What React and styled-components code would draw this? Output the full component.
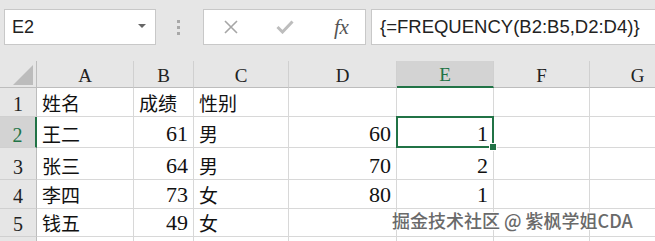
import React from "react";
import styled, { createGlobalStyle, css } from "styled-components";

const GREEN = "#217346";

const GlobalStyle = createGlobalStyle`
  html, body {
    margin: 0;
    padding: 0;
    background: #ffffff;
  }
`;

const Page = styled.div`
  position: relative;
  width: 655px;
  height: 241px;
  overflow: hidden;
  background: #ffffff;
  font-family: "Liberation Serif", "Noto Sans CJK SC", serif;
`;

const Toolbar = styled.div`
  display: flex;
  align-items: flex-start;
  height: 61px;
  padding: 9px 0 0 4px;
  box-sizing: border-box;
  background: #e6e6e6;
`;

const NameBox = styled.div`
  display: flex;
  align-items: center;
  justify-content: space-between;
  width: 152px;
  height: 36px;
  box-sizing: border-box;
  padding: 0 9px 0 7px;
  background: #fff;
  border: 1px solid #c8c8c8;
  font-family: "Liberation Sans", "Noto Sans", sans-serif;
  font-size: 18px;
  color: #222;
`;

const Caret = styled.span`
  width: 0;
  height: 0;
  border-left: 4px solid transparent;
  border-right: 4px solid transparent;
  border-top: 4px solid #666;
  margin-bottom: 2px;
`;

const Grip = styled.div`
  display: flex;
  flex-direction: column;
  gap: 3px;
  width: 47px;
  padding: 11px 0 0 21px;
  box-sizing: border-box;
`;

const GripDot = styled.span`
  width: 3px;
  height: 3px;
  background: #a8a8a8;
`;

const FormulaButtons = styled.div`
  display: flex;
  width: 163px;
  height: 36px;
  box-sizing: border-box;
  background: #fff;
  border: 1px solid #c8c8c8;
`;

const FormulaButton = styled.div`
  flex: 1;
  display: flex;
  align-items: center;
  justify-content: center;
`;

const FxLabel = styled.span`
  font-family: "Liberation Serif", serif;
  font-style: italic;
  font-size: 21px;
  color: #555;
  letter-spacing: -0.5px;
  margin-left: 6px;
`;

const FormulaInput = styled.div`
  flex: 1;
  display: flex;
  align-items: center;
  height: 36px;
  margin-left: 5px;
  padding-left: 8px;
  box-sizing: border-box;
  background: #fff;
  border: 1px solid #c8c8c8;
  border-right: none;
  font-family: "Liberation Sans", "Noto Sans", sans-serif;
  font-size: 18.5px;
  color: #222;
  white-space: nowrap;
`;

const Sheet = styled.div`
  display: grid;
  grid-template-columns: 37px 97px 60px 95px 108px 97px 96px 96px;
  grid-template-rows: 27px 29px 31px 32px 29px 28px 20px;
  width: 706px;
`;

const Cell = styled.div`
  position: relative;
  display: flex;
  align-items: flex-end;
  justify-content: ${(p) => (p.$num ? "flex-end" : "flex-start")};
  padding: 0 5px 2px 5px;
  box-sizing: border-box;
  border-right: 1px solid #d8d8d8;
  border-bottom: 1px solid #d8d8d8;
  font-size: ${(p) => (p.$num ? "22px" : "19px")};
  line-height: 1;
  color: #111;
  white-space: nowrap;
  z-index: ${(p) => (p.$selected ? 1 : "auto")};
`;

const headerBase = css`
  display: flex;
  align-items: center;
  justify-content: center;
  box-sizing: border-box;
  background: ${(p) => (p.$active ? "#d3d3d3" : "#e6e6e6")};
  color: ${(p) => (p.$active ? GREEN : "#222")};
  line-height: 1;
`;

const ColHead = styled.div`
  ${headerBase}
  padding-top: 2px;
  font-size: 19px;
  border-right: 1px solid #d0d0d0;
  border-bottom: ${(p) => (p.$active ? `2px solid ${GREEN}` : "1px solid #bdbdbd")};
`;

const RowHead = styled.div`
  ${headerBase}
  align-items: flex-end;
  padding-bottom: 2px;
  font-size: 20px;
  border-bottom: 1px solid #d0d0d0;
  border-right: ${(p) => (p.$active ? `2px solid ${GREEN}` : "1px solid #bdbdbd")};
`;

const Corner = styled.div`
  display: flex;
  align-items: flex-end;
  justify-content: flex-end;
  padding: 0 3px 2px 0;
  box-sizing: border-box;
  background: #e6e6e6;
  border-right: 1px solid #bdbdbd;
  border-bottom: 1px solid #bdbdbd;
`;

const CornerTriangle = styled.span`
  width: 0;
  height: 0;
  border-left: 20px solid transparent;
  border-bottom: 20px solid #bcbcbc;
`;

const Selection = styled.div`
  position: absolute;
  top: -1px;
  left: -1px;
  right: -1px;
  bottom: -1px;
  border: 2px solid ${GREEN};
  pointer-events: none;
`;

const FillHandle = styled.span`
  position: absolute;
  right: -5px;
  bottom: -5px;
  width: 6px;
  height: 6px;
  background: ${GREEN};
  border: 1px solid #fff;
`;

const Watermark = styled.div`
  position: absolute;
  left: 392px;
  top: 207px;
  z-index: 2;
  font-family: "Noto Sans CJK SC", "Noto Sans", sans-serif;
  font-size: 18px;
  font-weight: 500;
  color: #6a6a6a;
  white-space: nowrap;
  text-shadow: 1px 0 0 #fff, -1px 0 0 #fff, 0 1px 0 #fff, 0 -1px 0 #fff;
`;

const columns = ["A", "B", "C", "D", "E", "F", "G"];

const rows = [
  ["姓名", "成绩", "性别", "", "", "", ""],
  ["王二", "61", "男", "60", "1", "", ""],
  ["张三", "64", "男", "70", "2", "", ""],
  ["李四", "73", "女", "80", "1", "", ""],
  ["钱五", "49", "女", "", "", "", ""],
  ["", "", "", "", "", "", ""],
];

const isNum = (v) => /^\d+$/.test(v);

function App() {
  return (
    <Page>
      <GlobalStyle />
      <Toolbar>
        <NameBox>
          E2
          <Caret />
        </NameBox>
        <Grip>
          <GripDot />
          <GripDot />
          <GripDot />
        </Grip>
        <FormulaButtons>
          <FormulaButton>
            <svg width="16" height="16" viewBox="0 0 16 16">
              <path d="M2 2 L14 14 M14 2 L2 14" stroke="#a6a6a6" strokeWidth="1.6" fill="none" />
            </svg>
          </FormulaButton>
          <FormulaButton>
            <svg width="18" height="14" viewBox="0 0 18 14">
              <path d="M1.5 7 L6.5 12 L16.5 1.5" stroke="#bdbdbd" strokeWidth="3" fill="none" />
            </svg>
          </FormulaButton>
          <FormulaButton>
            <FxLabel>fx</FxLabel>
          </FormulaButton>
        </FormulaButtons>
        <FormulaInput>{"{=FREQUENCY(B2:B5,D2:D4)}"}</FormulaInput>
      </Toolbar>
      <Sheet>
        <Corner>
          <CornerTriangle />
        </Corner>
        {columns.map((c) => (
          <ColHead key={c} $active={c === "E"}>
            {c}
          </ColHead>
        ))}
        {rows.map((row, r) => {
          return (
            <React.Fragment key={r}>
              <RowHead $active={r === 1}>{r < 5 ? r + 1 : ""}</RowHead>
              {row.map((v, c) => {
                const selected = r === 1 && c === 4;
                return (
                  <Cell key={c} $num={isNum(v)} $selected={selected}>
                    {v}
                    {selected && (
                      <Selection>
                        <FillHandle />
                      </Selection>
                    )}
                  </Cell>
                );
              })}
            </React.Fragment>
          );
        })}
      </Sheet>
      <Watermark>掘金技术社区 @ 紫枫学姐CDA</Watermark>
    </Page>
  );
}

export default App;
